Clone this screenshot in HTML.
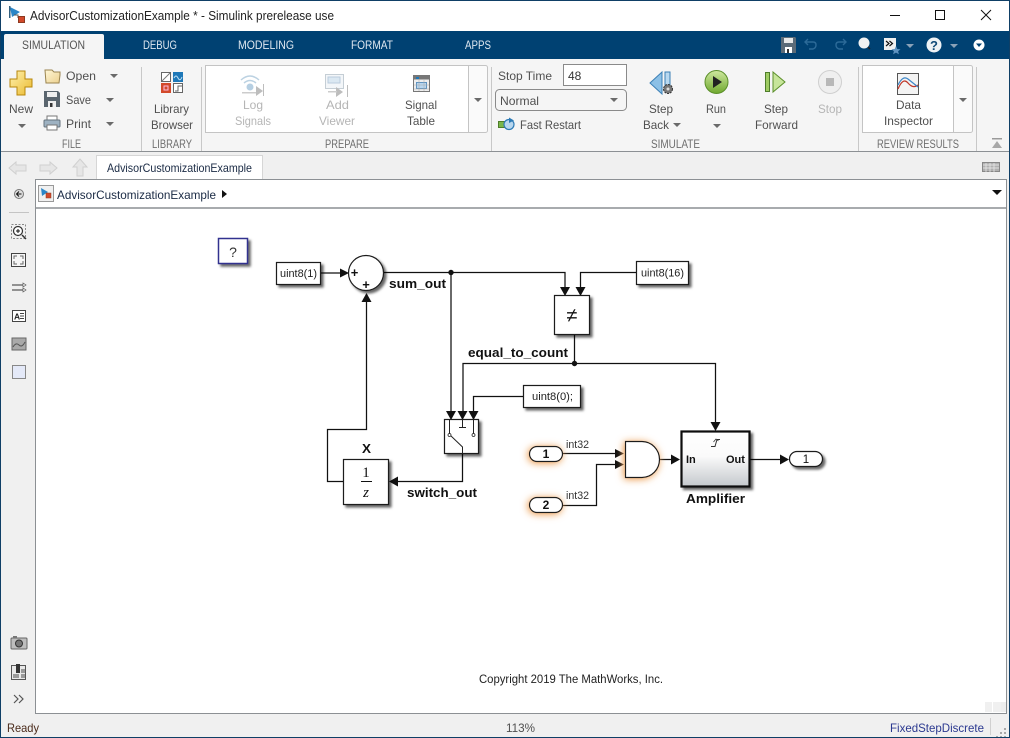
<!DOCTYPE html>
<html><head><meta charset="utf-8"><title>AdvisorCustomizationExample</title>
<style>
html,body{margin:0;padding:0;background:#fff;width:1010px;height:738px;overflow:hidden}
svg{display:block}
text{font-family:"Liberation Sans",sans-serif;font-size:12px;fill:#505050}
.t{fill:#dfe8f0;font-size:11.5px}
.g{fill:#b5b5b5}
.s{fill:#6e6e6e;font-size:11.5px}
.b{font-weight:bold;fill:#111;font-size:13px}
.d{fill:#222;font-size:11px}
.bk{fill:#fff;stroke:#1a1a1a;stroke-width:1.200}
.ar{fill:#6a6a6a}
</style></head><body>
<svg width="1010" height="738" viewBox="0 0 1010 738" xmlns="http://www.w3.org/2000/svg">
<defs>
<filter id="sh" x="-25%" y="-25%" width="160%" height="160%"><feDropShadow dx="2.500" dy="2.500" stdDeviation="1.300" flood-color="#000" flood-opacity=".6"/></filter>
<filter id="gl" x="-50%" y="-100%" width="200%" height="300%">
<feGaussianBlur in="SourceAlpha" stdDeviation="4" result="b"/>
<feFlood flood-color="#eda35c"/><feComposite in2="b" operator="in"/>
<feComponentTransfer result="c"><feFuncA type="linear" slope="1.150"/></feComponentTransfer>
<feOffset in="c" dx="-1" dy="1" result="o"/>
<feMerge><feMergeNode in="o"/><feMergeNode in="SourceGraphic"/></feMerge>
</filter>
<linearGradient id="sub" x1="0" y1="0" x2="0" y2="1"><stop offset="0" stop-color="#fff"/><stop offset=".45" stop-color="#fafafa"/><stop offset="1" stop-color="#c4c8cc"/></linearGradient>
<linearGradient id="run" x1="0" y1="0" x2="0" y2="1"><stop offset="0" stop-color="#cfe8a0"/><stop offset="1" stop-color="#6fa82e"/></linearGradient>
<linearGradient id="plus" x1="0" y1="0" x2="1" y2="1"><stop offset="0" stop-color="#fff2b0"/><stop offset="1" stop-color="#eab92e"/></linearGradient>
<linearGradient id="folder" x1="0" y1="0" x2="1" y2="1"><stop offset="0" stop-color="#fff7d8"/><stop offset="1" stop-color="#ecd08e"/></linearGradient>
</defs>

<!-- window -->
<rect width="1010" height="738" fill="#f0f0f0"/>
<rect width="1010" height="31" fill="#fff"/>
<rect x="0" y="31" width="1010" height="28" fill="#004172"/>
<rect x="0" y="59" width="1010" height="92" fill="#f5f5f5"/>
<rect x="0" y="151" width="1010" height="1" fill="#8c9094"/>

<!-- title bar -->
<path d="M10 7l10 5-8 5z" fill="#2a86c8"/><rect x="9" y="6" width="1.500" height="12" fill="#33607f"/>
<path d="M14 15h4v3" fill="none" stroke="#555"/>
<rect x="18.500" y="16.500" width="6" height="6" fill="#d2492a" stroke="#8c3a20"/>
<text x="30" y="20" textLength="304" lengthAdjust="spacingAndGlyphs" style="fill:#222;font-size:12.500px">AdvisorCustomizationExample * - Simulink prerelease use</text>
<rect x="890" y="15" width="10" height="1" fill="#111"/>
<rect x="935.500" y="10.500" width="9" height="9" fill="none" stroke="#111"/>
<path d="M981 10l10 10M991 10l-10 10" stroke="#111" fill="none"/>

<!-- tabs -->
<path d="M4 59V36q0-2 2-2h96q2 0 2 2v23z" fill="#f5f5f5"/>
<text x="22" y="49" textLength="63" lengthAdjust="spacingAndGlyphs" style="font-size:11.500px;fill:#555">SIMULATION</text>
<text class="t" x="143" y="49" textLength="34" lengthAdjust="spacingAndGlyphs">DEBUG</text>
<text class="t" x="238" y="49" textLength="56" lengthAdjust="spacingAndGlyphs">MODELING</text>
<text class="t" x="351" y="49" textLength="42" lengthAdjust="spacingAndGlyphs">FORMAT</text>
<text class="t" x="465" y="49" textLength="26" lengthAdjust="spacingAndGlyphs">APPS</text>

<!-- quick access -->
<path d="M781 37h14l1 1v15h-15z" fill="#5c6b78"/><rect x="784" y="38" width="9" height="5" fill="#e8e8e8"/><rect x="785" y="47" width="7" height="6" fill="#fff"/><rect x="787" y="49" width="2" height="4" fill="#333"/>
<path d="M808 39l-3 3 3 3M806 42h7q3 0 3 3t-3 4h-4" fill="none" stroke="#2c6a98" stroke-width="1.400"/>
<path d="M843 39l3 3-3 3M846 42h-7q-3 0-3 3t3 4h4" fill="none" stroke="#2c6a98" stroke-width="1.400"/>
<circle cx="864" cy="43" r="5.500" fill="#f2f2f2"/><path d="M868 47l2 2" stroke="#222" stroke-width="1.500"/>
<rect x="884" y="38" width="12" height="12" fill="#f0f0f0"/>
<path d="M886 41l3 2.500-3 2.500M889.500 41l3 2.500-3 2.500" fill="none" stroke="#111" stroke-width="1.200"/>
<path d="M896 46l1.300 3 3.200.3-2.400 2 .8 3-2.900-1.700-2.900 1.700.8-3-2.400-2 3.200-.3z" fill="#5f93c0"/>
<path d="M906 44h8l-4 4z" fill="#8aa2b8"/>
<circle cx="934" cy="45" r="7.500" fill="#eef2f5"/>
<text x="934" y="50" text-anchor="middle" style="font-weight:bold;font-size:13px;fill:#114a78">?</text>
<path d="M950 44h8l-4 4z" fill="#8aa2b8"/>
<circle cx="979" cy="45" r="5.500" fill="#fff"/><path d="M976 43.500h6l-3 3.500z" fill="#004172"/>

<!-- ribbon separators -->
<g fill="#c8c8c8">
<rect x="141" y="67" width="1" height="84"/><rect x="201" y="67" width="1" height="84"/>
<rect x="491" y="67" width="1" height="84"/><rect x="858" y="67" width="1" height="84"/>
<rect x="976" y="67" width="1" height="84"/>
</g>

<!-- FILE -->
<path d="M17 71h8v8h7v8h-7v8h-8v-8h-7v-8h7z" fill="url(#plus)" stroke="#b8860b"/>
<text x="9" y="113" textLength="24" lengthAdjust="spacingAndGlyphs">New</text>
<path class="ar" d="M18 124h8l-4 4z"/>
<path d="M45 70h7l2 2h6v3l-1 8H46z" fill="url(#folder)" stroke="#9a8450"/>
<text x="66" y="80" textLength="30" lengthAdjust="spacingAndGlyphs">Open</text>
<path class="ar" d="M110 74h8l-4 4z"/>
<path d="M44 91h14l2 2v14H44z" fill="#5a656e"/><rect x="47" y="92" width="10" height="5" fill="#eee"/><rect x="48" y="101" width="8" height="6" fill="#eee"/><rect x="50" y="103" width="2.500" height="4" fill="#333"/>
<text x="66" y="104" textLength="25" lengthAdjust="spacingAndGlyphs">Save</text>
<path class="ar" d="M106 98h8l-4 4z"/>
<rect x="47" y="116" width="10" height="4" fill="#fff" stroke="#777"/><rect x="44" y="120" width="16" height="7" rx="1" fill="#9eb2c2" stroke="#66747f"/><rect x="47" y="125" width="10" height="5" fill="#fff" stroke="#777"/>
<text x="66" y="128" textLength="25" lengthAdjust="spacingAndGlyphs">Print</text>
<path class="ar" d="M106 122h8l-4 4z"/>
<text class="s" x="62" y="148" textLength="19" lengthAdjust="spacingAndGlyphs">FILE</text>

<!-- LIBRARY -->
<rect x="161.500" y="72.500" width="9" height="9" fill="#fff" stroke="#666"/><path d="M162 81l8-8" stroke="#777"/>
<rect x="173" y="72" width="10" height="10" fill="#1e78b8"/><path d="M174 78q2-4 4 0t4-1" stroke="#bfe0f5" fill="none"/>
<rect x="161" y="83" width="10" height="10" fill="#d2492a"/><rect x="164" y="86" width="4" height="4" fill="none" stroke="#fbd"/>
<rect x="173.500" y="83.500" width="9" height="9" fill="#fff" stroke="#666"/><path d="M175 91h3v-5h4" fill="none" stroke="#666"/>
<text x="154" y="113" textLength="35" lengthAdjust="spacingAndGlyphs">Library</text>
<text x="151" y="129" textLength="42" lengthAdjust="spacingAndGlyphs">Browser</text>
<text class="s" x="152" y="148" textLength="40" lengthAdjust="spacingAndGlyphs">LIBRARY</text>

<!-- PREPARE -->
<rect x="205.500" y="65.500" width="282" height="67" rx="2" fill="#fafafa" stroke="#c4c4c4"/>
<rect x="205.500" y="65.500" width="263" height="67" fill="#fff" stroke="#c4c4c4"/>
<path d="M241 80q9-8 18 0M244 83q6-5 12 0" fill="none" stroke="#bcd2e2" stroke-width="1.500"/>
<circle cx="250" cy="87" r="3.500" fill="#b6cfe2"/><rect x="242" y="92" width="15" height="1.500" fill="#ccc"/>
<path d="M256 86l7 5-7 5z" fill="#bdbdbd"/><rect x="263" y="84" width="1" height="12" fill="#bdbdbd"/>
<text class="g" x="243" y="109" textLength="20" lengthAdjust="spacingAndGlyphs">Log</text>
<text class="g" x="235" y="125" textLength="36" lengthAdjust="spacingAndGlyphs">Signals</text>
<rect x="325.500" y="74.500" width="18" height="14" fill="#f3f6f9" stroke="#c5ced5"/><rect x="328" y="77" width="12" height="6" fill="#dbe8f2" stroke="#bcd"/>
<path d="M336 87l7 5-7 5z" fill="#bdbdbd"/><rect x="347" y="85" width="1" height="12" fill="#bdbdbd"/><rect x="328" y="91" width="9" height="1.500" fill="#ccc"/>
<text class="g" x="326" y="109" textLength="23" lengthAdjust="spacingAndGlyphs">Add</text>
<text class="g" x="319" y="125" textLength="36" lengthAdjust="spacingAndGlyphs">Viewer</text>
<rect x="413.500" y="75.500" width="16" height="16" fill="#eee" stroke="#777"/><rect x="414" y="76" width="15" height="3.500" fill="#777"/><rect x="416" y="77" width="3" height="2" fill="#1e78b8"/>
<rect x="416.500" y="82.500" width="10" height="6" fill="#b7d6f0" stroke="#5f93c0"/>
<path d="M414 85h15M414 89h15M419 80v11M424 80v11" stroke="#aaa" fill="none" stroke-width=".5"/>
<text x="405" y="109" textLength="32" lengthAdjust="spacingAndGlyphs">Signal</text>
<text x="407" y="125" textLength="28" lengthAdjust="spacingAndGlyphs">Table</text>
<path class="ar" d="M474 98h8l-4 4z"/>
<text class="s" x="325" y="148" textLength="44" lengthAdjust="spacingAndGlyphs">PREPARE</text>

<!-- SIMULATE -->
<text x="498" y="80" textLength="54" lengthAdjust="spacingAndGlyphs">Stop Time</text>
<rect x="563.500" y="64.500" width="63" height="21" fill="#fff" stroke="#8a8a8a"/>
<text x="568" y="80" style="fill:#333">48</text>
<rect x="495.500" y="89.500" width="131" height="21" rx="4" fill="#f5f5f5" stroke="#8a8a8a"/>
<text x="500" y="105" textLength="39" lengthAdjust="spacingAndGlyphs">Normal</text>
<path class="ar" d="M610 98h8l-4 4z"/>
<rect x="498.500" y="121.500" width="6" height="6" fill="#7ab648" stroke="#4e7d2a"/>
<circle cx="509" cy="124.500" r="5" fill="#b7d6ee" stroke="#2c7ab5" stroke-width="1.200"/>
<path d="M509 117.500l5 3-5 2.500z" fill="#2c7ab5"/>
<text x="520" y="129" textLength="61" lengthAdjust="spacingAndGlyphs">Fast Restart</text>

<path d="M650 83l12-11v22z" fill="#8cc0e6" stroke="#3b7fb5"/>
<rect x="665" y="72" width="5" height="18" fill="#b8d8f0" stroke="#3b7fb5"/>
<circle cx="668" cy="89" r="4.500" fill="#777" stroke="#333" stroke-dasharray="2 1"/><circle cx="668" cy="89" r="1.500" fill="#ddd"/>
<text x="649" y="113" textLength="24" lengthAdjust="spacingAndGlyphs">Step</text>
<text x="643" y="129" textLength="26" lengthAdjust="spacingAndGlyphs">Back</text>
<path class="ar" d="M673 123h8l-4 4z"/>
<circle cx="716.500" cy="82" r="11.500" fill="url(#run)" stroke="#5b8f2a"/>
<path d="M713 76l9 6-9 6z" fill="#222"/>
<text x="706" y="113" textLength="20" lengthAdjust="spacingAndGlyphs">Run</text>
<path class="ar" d="M713 124h8l-4 4z"/>
<rect x="765.500" y="72.500" width="4" height="19" fill="#9ecb62" stroke="#4e7d2a"/>
<path d="M773 72l12 10-12 10z" fill="#c7e59a" stroke="#5b8f2a"/>
<text x="764" y="113" textLength="24" lengthAdjust="spacingAndGlyphs">Step</text>
<text x="755" y="129" textLength="43" lengthAdjust="spacingAndGlyphs">Forward</text>
<circle cx="830" cy="82" r="11.500" fill="#efefef" stroke="#cfcfcf"/>
<rect x="826" y="78" width="8" height="8" fill="#b8b8b8"/>
<text class="g" x="818" y="113" textLength="24" lengthAdjust="spacingAndGlyphs">Stop</text>
<text class="s" x="651" y="148" textLength="49" lengthAdjust="spacingAndGlyphs">SIMULATE</text>

<!-- REVIEW RESULTS -->
<rect x="862.500" y="65.500" width="110" height="67" rx="2" fill="#fafafa" stroke="#c4c4c4"/>
<rect x="862.500" y="65.500" width="91" height="67" fill="#fff" stroke="#c4c4c4"/>
<rect x="897.500" y="73.500" width="21" height="21" fill="#f4f4f4" stroke="#555"/>
<path d="M898 89q5-12 10-6t10 2" fill="none" stroke="#c0392b" stroke-width="1.200"/>
<path d="M898 85q5-10 10-6t10 8" fill="none" stroke="#3b86c8" stroke-width="1.200"/>
<text x="896" y="109" textLength="25" lengthAdjust="spacingAndGlyphs">Data</text>
<text x="884" y="125" textLength="49" lengthAdjust="spacingAndGlyphs">Inspector</text>
<path class="ar" d="M959 98h8l-4 4z"/>
<text class="s" x="877" y="148" textLength="82" lengthAdjust="spacingAndGlyphs">REVIEW RESULTS</text>
<rect x="992" y="138" width="10" height="1.500" fill="#9a9a9a"/><path d="M992 148l5-7 5 7z" fill="#a8a8a8"/>

<!-- explorer bar -->
<path d="M9 168l7-6v3h10v6H16v3z" fill="#e6e6e6" stroke="#d0d0d0"/>
<path d="M57 168l-7-6v3H40v6h10v3z" fill="#e6e6e6" stroke="#d0d0d0"/>
<path d="M80 159l7 8h-4v9h-6v-9h-4z" fill="#e6e6e6" stroke="#d0d0d0"/>
<path d="M96.500 179V155.500H262.500V179" fill="#fff" stroke="#d6d6d6"/>
<text x="107" y="172" textLength="145" lengthAdjust="spacingAndGlyphs" style="fill:#1a2a44">AdvisorCustomizationExample</text>
<rect x="982.500" y="162.500" width="17" height="9" fill="#b0b0b0" stroke="#888"/>
<path d="M983 165h16M983 168h16M986 163v9M990 163v9M994 163v9" stroke="#eee" stroke-width=".7"/>

<!-- sidebar -->
<rect x="1" y="179" width="34" height="535" fill="#f0f0f0"/>
<circle cx="19" cy="194" r="4.500" fill="#ddd" stroke="#777"/><path d="M21.500 194h-5M19 191.500l-2.500 2.500 2.500 2.500" stroke="#111" fill="none"/>
<rect x="9" y="212" width="20" height="1" fill="#c4c4c4"/>
<rect x="11.500" y="224.500" width="14" height="14" fill="none" stroke="#888" stroke-dasharray="2 1.500"/>
<circle cx="18" cy="231" r="4.500" fill="#fff" stroke="#333" stroke-width="1.200"/><path d="M16 231h4M18 229v4" stroke="#111"/><path d="M22 235l4 4" stroke="#333" stroke-width="1.500"/>
<rect x="11.500" y="253.500" width="14" height="13" fill="#f6f6f6" stroke="#444"/>
<path d="M14 259v-3h3M23 259v-3h-3M14 261v3h3M23 261v3h-3" stroke="#666" fill="none"/>
<path d="M12 285h12M12 290h12" stroke="#333"/><path d="M23 283l3 2-3 2zM23 288l3 2-3 2z" fill="#fff" stroke="#555" stroke-width=".7"/>
<rect x="12.500" y="310.500" width="13" height="11" fill="#fff" stroke="#444"/>
<text x="14" y="319.500" style="font-size:8.500px;font-weight:bold;fill:#222">A</text><path d="M20 313.500h4M20 316h4M20 318.500h4" stroke="#444"/>
<rect x="12" y="338" width="14" height="12" fill="#a9a9a9" stroke="#666"/><path d="M13 347q3-5 6-2t6-3" stroke="#555" fill="none"/>
<rect x="12.500" y="365.500" width="13" height="13" fill="#e4e9f8" stroke="#888"/>
<rect x="11" y="638" width="16" height="11" rx="1" fill="#bdbdbd" stroke="#666"/><circle cx="19" cy="643.500" r="3.500" fill="#777" stroke="#333"/><rect x="13" y="636" width="4" height="2" fill="#777"/>
<rect x="11.500" y="665.500" width="14" height="14" fill="#e8e8e8" stroke="#555"/><rect x="16" y="664" width="4" height="9" fill="#333"/><rect x="21" y="669" width="4" height="4" fill="#999"/><rect x="21" y="674" width="4" height="4" fill="#999"/><rect x="13" y="674" width="6" height="4" fill="#999"/>
<path d="M14 695l4 4-4 4M19 695l4 4-4 4" fill="none" stroke="#555" stroke-width="1.200"/>

<!-- canvas frame -->
<rect x="35" y="179" width="971" height="535" fill="#fff"/>
<rect x="35" y="179" width="1" height="535" fill="#8c9094"/>
<rect x="35" y="179" width="971" height="1" fill="#8c9094"/>
<rect x="35" y="713" width="971" height="1" fill="#8c9094"/>
<rect x="1006" y="179" width="1" height="535" fill="#8c9094"/>
<rect x="36" y="180" width="970" height="28" fill="#fff"/>
<rect x="36" y="207" width="970" height="2" fill="#a8abae"/>
<rect x="38.500" y="185.500" width="15" height="16" fill="#f0f0f0" stroke="#999"/>
<path d="M41 188l7 4-6 4z" fill="#2a86c8"/><rect x="46" y="193" width="5" height="5" fill="#d2492a" stroke="#8c3a20" stroke-width=".5"/>
<text x="57" y="199" textLength="159" lengthAdjust="spacingAndGlyphs" style="fill:#1a2a44">AdvisorCustomizationExample</text>
<path d="M222 190l5 4-5 4z" fill="#111"/>
<path d="M992 190h10l-5 5z" fill="#111"/>
<rect x="985" y="702" width="7" height="10" fill="#f0f0f0"/><rect x="993" y="702" width="8" height="10" fill="#f0f0f0"/><rect x="1001" y="702" width="5" height="10" fill="#ededed"/>

<!-- diagram -->
<rect x="218.500" y="238.500" width="29" height="25" fill="#fff" stroke="#33338f" stroke-width="1.500" filter="url(#sh)"/>
<text x="233" y="257" text-anchor="middle" style="font-size:14px;fill:#333">?</text>

<g fill="none" stroke="#111" stroke-width="1.250">
<path d="M321 273H342M383 272.500H565V288M451 272.500V413M636 272.500H580.500V288"/>
<path d="M574.500 335V363.500M463 413V363.500H715.500V423"/>
<path d="M523 396.500H473.500V413M462.500 454V481.500H396M343 481.500H327.500V429.500H366.500V300"/>
<path d="M563 453.500H616M563 505.500H596.500V464.500H616M660 459.500H673M750 459.500H781"/>
</g>
<g fill="#111">
<path d="M340 268.500l9 4.500-9 4.500z"/>
<path d="M361.500 302l5-9 5 9z"/>
<path d="M560 287h10l-5 9z"/><path d="M575.500 287h10l-5 9z"/>
<path d="M446 411h10l-5 9z"/><path d="M457.500 411h10l-5 9z"/><path d="M468.500 411h10l-5 9z"/>
<path d="M710.500 422h10l-5 9z"/>
<path d="M398 476.500l-9 5 9 5z"/>
<path d="M615 449l9 4.500-9 4.500z"/><path d="M615 460l9 4.500-9 4.500z"/>
<path d="M671 454.500l9 5-9 5z"/><path d="M780 454.500l9 5-9 5z"/>
<circle cx="451" cy="272.500" r="2.700"/><circle cx="574.500" cy="363.500" r="2.700"/>
</g>

<rect class="bk" x="276.500" y="262.500" width="44" height="22" filter="url(#sh)"/>
<text class="d" x="280" y="277" textLength="37" lengthAdjust="spacingAndGlyphs">uint8(1)</text>
<circle class="bk" cx="366" cy="273" r="17.500" filter="url(#sh)"/>
<text x="354.500" y="277" text-anchor="middle" style="font-weight:bold;font-size:13px;fill:#111">+</text>
<text x="366" y="289" text-anchor="middle" style="font-weight:bold;font-size:13px;fill:#111">+</text>
<text class="b" x="389" y="288" textLength="57" lengthAdjust="spacingAndGlyphs">sum_out</text>

<rect class="bk" x="636.500" y="261.500" width="52" height="23" filter="url(#sh)"/>
<text class="d" x="641" y="276.500" textLength="43" lengthAdjust="spacingAndGlyphs">uint8(16)</text>
<rect class="bk" x="554.500" y="295.500" width="35" height="39" filter="url(#sh)"/>
<text x="572" y="322" text-anchor="middle" style="font-size:20px;fill:#111">≠</text>
<text class="b" x="468" y="357" textLength="100" lengthAdjust="spacingAndGlyphs">equal_to_count</text>

<rect class="bk" x="523.500" y="385.500" width="57" height="22" filter="url(#sh)"/>
<text class="d" x="532" y="400" textLength="41" lengthAdjust="spacingAndGlyphs">uint8(0);</text>

<rect class="bk" x="444.500" y="419.500" width="34" height="34" filter="url(#sh)"/>
<path d="M449.500 420V434M462.500 420V427M459 427.500H466M473.500 420V434M450 435L462.500 447V454" fill="none" stroke="#222"/>
<circle cx="449.500" cy="435" r="1.500" fill="#fff" stroke="#222" stroke-width=".8"/><circle cx="473.500" cy="435" r="1.500" fill="#fff" stroke="#222" stroke-width=".8"/>

<text class="b" x="362" y="453" textLength="9" lengthAdjust="spacingAndGlyphs">X</text>
<rect class="bk" x="343.500" y="459.500" width="45" height="45" filter="url(#sh)"/>
<text x="366" y="477" text-anchor="middle" style="font-family:'Liberation Serif',serif;font-size:15px;fill:#111">1</text>
<rect x="361" y="481" width="11" height="1" fill="#111"/>
<text x="366" y="497" text-anchor="middle" style="font-family:'Liberation Serif',serif;font-style:italic;font-size:15px;fill:#111">z</text>
<text class="b" x="407" y="497" textLength="70" lengthAdjust="spacingAndGlyphs">switch_out</text>

<rect class="bk" x="529.500" y="446.500" width="33" height="15" rx="7.500" filter="url(#gl)"/>
<text x="546" y="458" text-anchor="middle" style="font-weight:bold;font-size:12px;fill:#111">1</text>
<rect class="bk" x="529.500" y="497.500" width="33" height="15" rx="7.500" filter="url(#gl)"/>
<text x="546" y="509" text-anchor="middle" style="font-weight:bold;font-size:12px;fill:#111">2</text>
<text x="566" y="448" textLength="23" lengthAdjust="spacingAndGlyphs" style="font-size:11px;fill:#333">int32</text>
<text x="566" y="499" textLength="23" lengthAdjust="spacingAndGlyphs" style="font-size:11px;fill:#333">int32</text>

<path class="bk" d="M625.500 441.500H642A17.500 18 0 0 1 642 477.500H625.500Z" filter="url(#gl)"/>

<rect x="681.500" y="431.500" width="68" height="55" fill="url(#sub)" stroke="#111" stroke-width="2.200" filter="url(#sh)"/>
<text x="686" y="463" style="font-weight:bold;font-size:11px;fill:#111">In</text>
<text x="726" y="463" style="font-weight:bold;font-size:11px;fill:#111">Out</text>
<path d="M711 446.500h4l2-7h3" fill="none" stroke="#333"/><path d="M713.500 442l2.500-3 2.500 2" fill="none" stroke="#333" stroke-width=".8"/>
<text class="b" x="686" y="503" textLength="59" lengthAdjust="spacingAndGlyphs">Amplifier</text>

<rect class="bk" x="789.500" y="451.500" width="33" height="15" rx="7.500" filter="url(#sh)"/>
<text x="806" y="463" text-anchor="middle" style="font-size:11.500px;fill:#111">1</text>

<text x="479" y="683" textLength="184" lengthAdjust="spacingAndGlyphs" style="font-size:11.500px;fill:#222">Copyright 2019 The MathWorks, Inc.</text>

<!-- status -->
<text x="7" y="732" textLength="32" lengthAdjust="spacingAndGlyphs" style="fill:#4a2a1a">Ready</text>
<text x="506" y="732" textLength="29" lengthAdjust="spacingAndGlyphs">113%</text>
<text x="890" y="732" textLength="94" lengthAdjust="spacingAndGlyphs" style="fill:#2b3990">FixedStepDiscrete</text>
<rect x="990" y="718" width="1" height="17" fill="#d0d0d0"/>
<g fill="#a8a8a8"><rect x="1004" y="728" width="2" height="2"/><rect x="1000" y="732" width="2" height="2"/><rect x="1004" y="732" width="2" height="2"/><rect x="996" y="736" width="2" height="1"/><rect x="1000" y="736" width="2" height="1"/><rect x="1004" y="736" width="2" height="1"/></g>

<!-- window border -->
<rect x=".5" y=".5" width="1009" height="737" fill="none" stroke="#0f3f66"/>
</svg>
</body></html>
